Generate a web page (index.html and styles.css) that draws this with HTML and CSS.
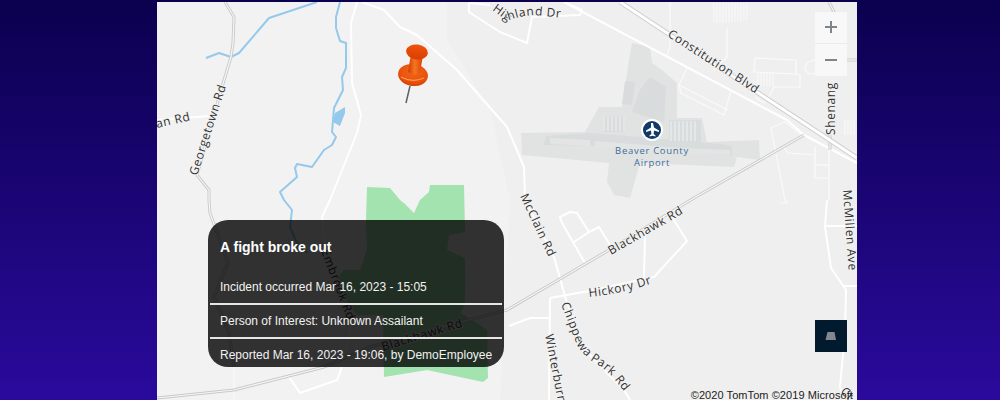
FILE: index.html
```html
<!DOCTYPE html>
<html lang="en">
<head>
<meta charset="utf-8">
<title>Incident map</title>
<link rel="stylesheet" href="styles.css">
</head>
<body>
<main class="map">
  <svg class="map-canvas" viewBox="157 2 700 398" width="700" height="398" aria-hidden="true">
    <defs>
      <linearGradient id="pinHead" x1="0" y1="0" x2="0" y2="1">
        <stop offset="0" stop-color="#f0530c"/><stop offset="1" stop-color="#d93f03"/>
      </linearGradient>
      <linearGradient id="pinShaft" x1="0" y1="0" x2="1" y2="0">
        <stop offset="0" stop-color="#cf3d04"/><stop offset=".45" stop-color="#f9751d"/><stop offset="1" stop-color="#d24204"/>
      </linearGradient>
      <radialGradient id="pinBase" cx=".5" cy=".35" r=".7">
        <stop offset="0" stop-color="#f2671a"/><stop offset=".7" stop-color="#e9500b"/><stop offset="1" stop-color="#c93a03"/>
      </radialGradient>
      <path id="p-high" d="M492 10 L507 21 Q520 16 534 15 L564 18"/>
      <path id="p-chip" d="M561 304 L577 345 Q585 358 600 366 L612 376 L626 394"/>
      <path id="p-hick" d="M589 297 Q622 294 653 283"/>
    </defs>
    <rect class="ground" x="157" y="2" width="700" height="398"/>
    <polygon class="ground-east" points="447,2 857,2 857,400 500,400 510,200 490,110 447,40"/>

    <polygon class="airport" points="632,43 650,47 652,63 662,70 677,83 677,118 702,118 707,142 759,140 760,160 737,157 734,167 640,163 630,198 614,195 607,182 609,163 522,155 521,133 585,132 599,107 622,107 629,60"/>
    <g class="airport-dark">
      <polygon points="625,81 635,82 632,105 622,104"/>
      <polygon points="650,77 666,87 664,122 632,112 640,90"/>
      <rect x="603" y="116" width="22" height="16"/>
      <rect x="669" y="120" width="32" height="22"/>
      <polygon points="546,136 590,133 640,137 720,144 732,146 732,156 640,147 544,145"/>
    </g>
    <g class="airport-runway">
      <polygon points="550,138 590,140 590,146 550,144"/>
      <polygon points="595,141 680,148 730,150 730,155 680,153 595,147"/>
    </g>
    <g class="airport-stripes">
      <path d="M604 116V131M608 116V131M612 116V131M616 116V131M620 116V131M624 116V131"/>
      <path d="M671 121V141M675 121V141M679 121V141M683 121V141M687 121V141M691 121V141M695 121V141"/>
    </g>

    <polygon class="park" points="367,187 390,188 400,200 405,204 414,213 420,200 429,192 430,185 464,185 465,232 449,235 447,250 465,258 465,303 461,313 487,330 488,378 483,382 427,370 384,377 383,315 358,315 339,297 337,278 344,270 360,270 367,250 366,220"/>

    <g class="river">
      <polyline points="206,58 219,53 231,57 239,53 269,18 317,2"/>
      <polyline points="340,2 336,17 336,28 340,41 346,43 346,68 342,77 343,90 334,108 332,132 336,137 332,145 324,150 312,167 297,164 295,168 297,177 280,192 284,200 292,210 290,227 297,243 307,253"/>
    </g>
    <polygon class="lake" points="345,107 335,113 333,122 340,126 345,113"/>

    <g class="road">
      <polyline points="357,2 351,23 352,83 361,115 357,133 330,200 322,217 326,250 350,313 350,333 340,373 337,380 300,393 289,377"/>
      <polyline points="362,2 384,10 400,27 417,35 457,70 507,127 524,167 525,200 554,257 567,303 585,350 624,390 630,400"/>
      <polyline points="469,3 469,12 500,32 527,43 532,17 580,15 582,10 564,2"/>
      <polyline points="469,3 490,5"/>
      <polyline points="157,120 210,116"/>
      <polyline points="550,298 589,291 654,277 687,241 672,217"/>
      <polyline points="550,298 549,400"/>
      <polyline points="509,326 530,318 549,318"/>
      <polyline points="645,235 644,278"/>
      <polyline points="585,263 562,223 560,217 570,212 577,213 589,232 574,242"/>
      <polyline points="589,232 599,227 610,245"/>
      <polyline points="827,200 825,227 831,268 846,290 845,333 840,387 844,400"/>
      <polyline points="825,226 857,226"/>
      <polyline points="844,286 857,286"/>
      <polyline points="564,2 787,120 804,135 857,163"/>
    </g>
    <g class="road-thin">
      <polyline points="670,2 670,47 667,55"/>
      <polyline points="727,28 727,57 714,70"/>
      <polyline points="687,68 679,85 681,93 724,115 731,91"/>
      <polyline points="679,85 728,110"/>
      <polyline points="755,58 796,60 796,74 800,75 800,87 774,87 770,95 764,103 755,97"/>
      <polyline points="755,58 754,72 796,74"/>
      <polyline points="771,128 785,122 802,135"/>
      <polyline points="771,128 785,200 787,203 780,203"/>
      <polyline points="784,147 788,153 815,155"/>
      <polyline points="815,60 806,63 805,70 809,74 815,73"/>
      <polyline points="815,147 815,178 829,178"/>
      <polyline points="815,165 829,165"/>
      <polyline points="829,148 829,200"/>
      <polyline points="234,367 234,400"/>
    </g>
    <g class="stripes">
      <path d="M714 3V22M717 3V23M720 3V23M723 3V23M726 3V23M729 3V23M732 3V22M735 3V22M738 3V21M741 3V21M744 3V20M747 3V20"/>
      <path d="M758 73V86M761 73V86M764 73V86M767 73V86M770 73V86M773 73V86"/>
      <path d="M845 120V135M848 120V135M851 120V135M854 120V135"/>
    </g>
    <g class="road-cased">
      <polyline class="case" points="225,2 234,17 233,43 231,57 222,87 197,175 209,190 209,200 210,213 228,263 214,297 229,333 234,367"/>
      <polyline class="fill" points="225,2 234,17 233,43 231,57 222,87 197,175 209,190 209,200 210,213 228,263 214,297 229,333 234,367"/>
      <polyline class="case" points="804,135 694,198 609,250 507,310 457,323 370,347 324,367 234,390 157,398"/>
      <polyline class="fill" points="804,135 694,198 609,250 507,310 457,323 370,347 324,367 234,390 157,398"/>
      <polyline class="case" points="829,2 835,14"/>
      <polyline class="fill" points="829,2 835,14"/>
      <polyline class="case" points="847,60 857,60"/>
      <polyline class="fill" points="847,60 857,60"/>
      <polyline class="case" points="830,135 830,150"/>
      <polyline class="fill" points="830,135 830,150"/>
    </g>
    <g class="highway">
      <polyline class="case" points="620,2 857,158"/>
      <polyline class="fill" points="620,2 857,158"/>
    </g>

    <text class="label" transform="translate(157 128) rotate(-13)">an Rd</text>
    <text class="label" transform="translate(197 176) rotate(-72)">Georgetown Rd</text>
    <text class="label"><textPath href="#p-high">Highland Dr</textPath></text>
    <text class="label" transform="translate(667 36) rotate(33)">Constitution Blvd</text>
    <text class="label" transform="translate(835 135) rotate(-90)">Shenang</text>
    <text class="label" transform="translate(843 190) rotate(86)">McMillen Ave</text>
    <text class="label" transform="translate(520 196) rotate(65)">McClain Rd</text>
    <text class="label" transform="translate(611 255) rotate(-30)">Blackhawk Rd</text>
    <text class="label"><textPath href="#p-hick">Hickory Dr</textPath></text>
    <text class="label"><textPath href="#p-chip">Chippewa Park Rd</textPath></text>
    <text class="label" transform="translate(545 335) rotate(79)">Winterburn Rd</text>
    <text class="label" transform="translate(383 351) rotate(-17)">Blackhawk Rd</text>
    <text class="label" transform="translate(321 251) rotate(69)">Embrook Rd</text>
    <text class="label" transform="translate(840 392) rotate(45)">Ct</text>

    <circle class="airport-ring" cx="652" cy="130" r="11"/>
    <circle class="airport-disc" cx="652" cy="130" r="9"/>
    <path class="airport-plane" d="M651 123h2l1 4.500 5 3v1.500l-5-1.500-.4 3.500 1.900 1.500v1l-3-.8-3 .8v-1l1.900-1.500-.4-3.500-5 1.500v-1.500l5-3z"/>
    <text class="airport-name" x="652" y="154">Beaver County</text>
    <text class="airport-name" x="652" y="166">Airport</text>

    <g class="pin">
      <path class="pin-needle" d="M410 86 L406 103"/>
      <ellipse cx="413" cy="75" rx="15" ry="11" transform="rotate(8 413 75)" fill="url(#pinBase)"/>
      <path d="M401 77 Q412 83 424 78" class="pin-shine"/>
      <path d="M411 54 L423 55 L420 73 Q414 76 408 72 Z" fill="url(#pinShaft)"/>
      <ellipse cx="417" cy="52" rx="11" ry="7.500" transform="rotate(8 417 52)" fill="url(#pinHead)"/>
    </g>
  </svg>

  <div class="controls">
    <button class="zoom-btn zoom-in" aria-label="Zoom in">
      <svg viewBox="0 0 32 32" width="32" height="32"><path d="M16 10v12M10 16h12"/></svg>
    </button>
    <button class="zoom-btn" aria-label="Zoom out">
      <svg viewBox="0 0 32 32" width="32" height="32"><path d="M10 16h12"/></svg>
    </button>
  </div>

  <button class="tilt-btn" aria-label="Pitch">
    <svg viewBox="0 0 32 32" width="32" height="32"><polygon points="12.500,12 19.500,12 21,20 10.500,20"/></svg>
  </button>

  <div class="copyright">©2020 TomTom ©2019 Microsoft</div>

  <section class="popup">
    <h2 class="popup-title">A fight broke out</h2>
    <p class="popup-row">Incident occurred Mar 16, 2023 - 15:05</p>
    <p class="popup-row">Person of Interest: Unknown Assailant</p>
    <p class="popup-row">Reported Mar 16, 2023 - 19:06, by DemoEmployee</p>
  </section>
</main>
</body>
</html>
```

FILE: styles.css
```css
html, body {
  margin: 0;
  height: 400px;
  overflow: hidden;
}
body {
  padding-top: 2px;
  box-sizing: border-box;
  background: linear-gradient(180deg, #0b004e 0%, #2a0a9c 100%);
  font-family: "Liberation Sans", Arial, sans-serif;
}
.map {
  position: relative;
  width: 700px;
  height: 398px;
  margin-left: 157px;
  overflow: hidden;
  background: #f2f2f2;
}
.map-canvas {
  display: block;
}
.ground { fill: #f2f2f2; }
.ground-east { fill: #efefef; }
.airport { fill: #e1e3e3; }
.airport-dark { fill: #d9dcdc; }
.airport-runway { fill: #e3e5e5; }
.airport-stripes path {
  fill: none;
  stroke: #e8eaea;
  stroke-width: 1.500;
}
.park { fill: #a3e3b0; }
.river polyline {
  fill: none;
  stroke: #94c9ec;
  stroke-width: 2;
  stroke-linejoin: round;
}
.lake { fill: #94c9ec; }
.road polyline {
  fill: none;
  stroke: #ffffff;
  stroke-width: 2;
  stroke-linejoin: round;
}
.road-thin polyline {
  fill: none;
  stroke: #fafafa;
  stroke-width: 1.200;
  stroke-linejoin: round;
}
.stripes path {
  fill: none;
  stroke: #fafafa;
  stroke-width: 1;
}
.road-cased polyline { fill: none; stroke-linejoin: round; }
.road-cased .case { stroke: #c8c8c8; stroke-width: 3; }
.road-cased .fill { stroke: #f7f7f7; stroke-width: 1.200; }
.highway polyline { fill: none; }
.highway .case { stroke: #cfcfcf; stroke-width: 5; }
.highway .fill { stroke: #ffffff; stroke-width: 3; }
.label {
  font-family: "Open Sans", sans-serif;
  font-size: 12px;
  letter-spacing: 0.6px;
  fill: #333333;
  paint-order: stroke;
  stroke: #f2f2f2;
  stroke-width: 2px;
}
.airport-ring { fill: #ffffff; }
.airport-disc { fill: #123a68; }
.airport-plane { fill: #ffffff; }
.airport-name {
  font-family: "Open Sans", sans-serif;
  font-size: 9.500px;
  font-weight: 500;
  letter-spacing: 0.7px;
  text-anchor: middle;
  fill: #3f6c9b;
}
.pin-needle {
  stroke: #5a6270;
  stroke-width: 1.500;
  fill: none;
}
.pin-shine {
  fill: none;
  stroke: #ff9a5c;
  stroke-width: 1.200;
}
.controls {
  position: absolute;
  top: 10px;
  right: 10px;
  display: flex;
  flex-direction: column;
  gap: 1px;
  background: #ececec;
}
.zoom-btn, .tilt-btn {
  display: block;
  width: 32px;
  padding: 0;
  border: 0;
}
.zoom-btn {
  height: 32px;
  background: #f8f8f8;
}
.zoom-in { height: 31px; }
.zoom-btn svg {
  display: block;
}
.zoom-in svg { margin-top: -1px; }
.zoom-btn path {
  stroke: #7d858b;
  stroke-width: 2;
  fill: none;
}
.tilt-btn {
  position: absolute;
  top: 318px;
  right: 10px;
  height: 32px;
  background: #011a2e;
}
.tilt-btn svg { display: block; }
.tilt-btn polygon { fill: #82888d; }
.copyright {
  position: absolute;
  right: 4px;
  bottom: -1px;
  font-size: 11px;
  letter-spacing: 0.07px;
  line-height: 12px;
  color: #222222;
  white-space: nowrap;
}
.popup {
  position: absolute;
  left: 51px;
  top: 218px;
  width: 296px;
  height: 147px;
  box-sizing: border-box;
  padding: 0 2px;
  border-radius: 20px;
  background: rgba(0, 0, 0, 0.8);
  color: #f2f2f2;
  font-size: 12px;
}
.popup-title {
  margin: 0;
  padding: 20px 10px 0;
  height: 51px;
  box-sizing: border-box;
  font-size: 14px;
  line-height: 15px;
  font-weight: 700;
  color: #ffffff;
}
.popup-row {
  margin: 0;
  padding: 0 10px;
  height: 32px;
  box-sizing: border-box;
  line-height: 32px;
  white-space: nowrap;
}
.popup-row + .popup-row {
  height: 34px;
  border-top: 2px solid #e6e6e6;
}
```
